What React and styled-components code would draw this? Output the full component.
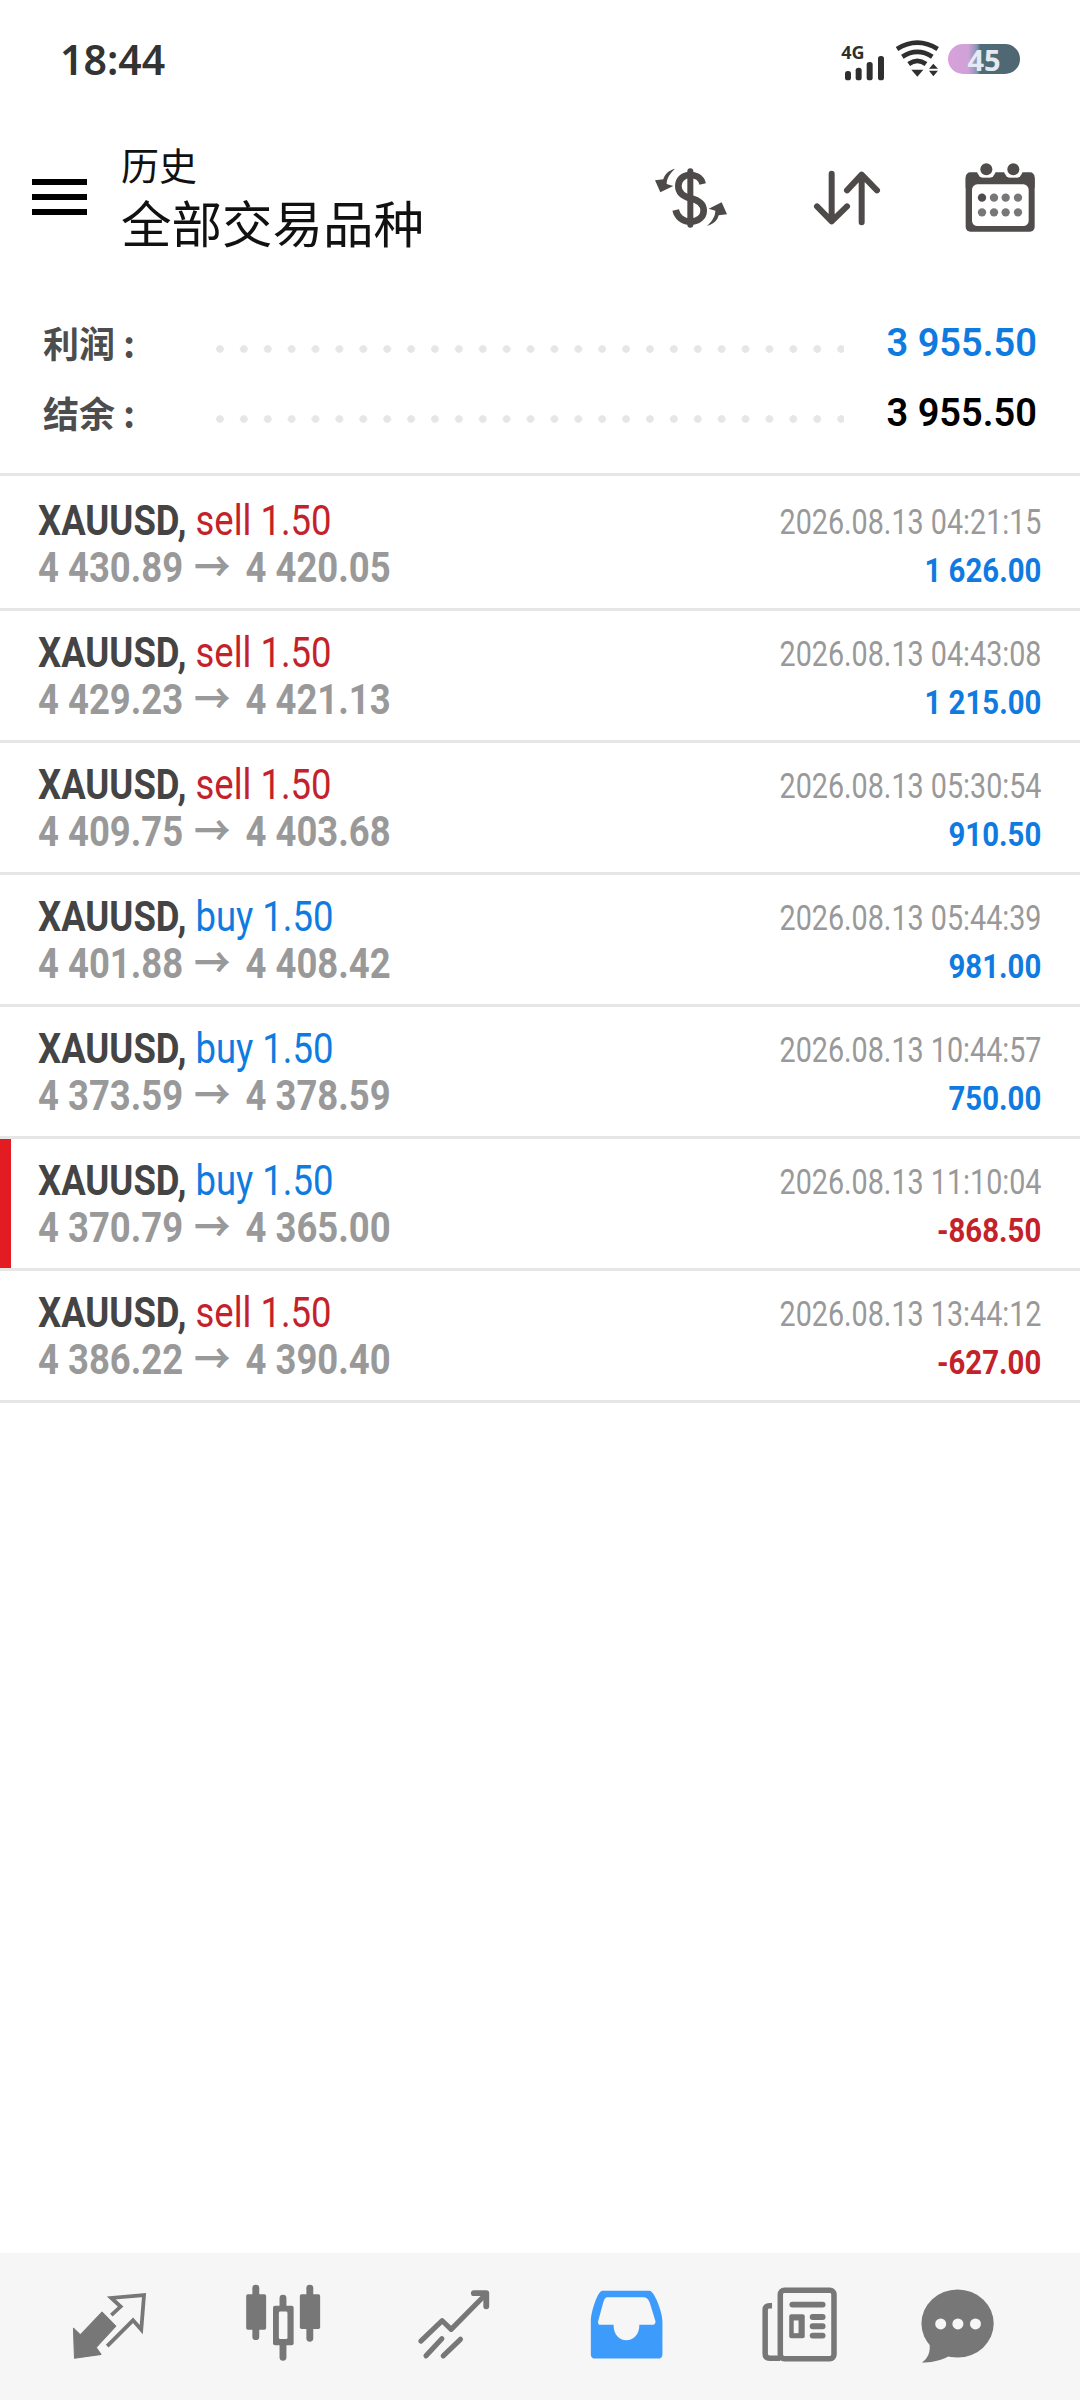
import styled, { createGlobalStyle } from "styled-components";

const GlobalStyle = createGlobalStyle`
  html, body {
    margin: 0;
    padding: 0;
    background: #fff;
  }
`;

const BLUE = "#0f7be0";
const RED = "#c4222a";
const NAV_BG = "#f6f6f6";

const Page = styled.div`
  display: flex;
  flex-direction: column;
  width: 1080px;
  height: 2400px;
  background: #fff;
  font-family: Roboto, "Noto Sans CJK SC", sans-serif;
`;

const StatusBar = styled.div`
  display: flex;
  justify-content: space-between;
  align-items: center;
  height: 118px;
  padding: 0 60px 0 60px;
  box-sizing: border-box;
`;

const Time = styled.div`
  font-family: "Noto Sans", sans-serif;
  font-size: 41px;
  font-weight: 600;
  color: #333;
`;

const StatusIcons = styled.div`
  display: flex;
  align-items: center;
  gap: 7px;
`;

const Battery = styled.div`
  display: flex;
  justify-content: center;
  align-items: center;
  width: 72px;
  height: 30px;
  border-radius: 15px;
  background: linear-gradient(90deg, #d9a0da 0%, #cfa2d8 28%, #8a94b4 40%, #4f6d78 45%, #4f6671 100%);
  color: #e4e9f2;
  font-family: "Noto Sans", sans-serif;
  font-size: 29px;
  font-weight: 700;
`;

const Header = styled.div`
  display: flex;
  align-items: center;
  height: 160px;
  padding: 0 42px 0 32px;
  box-sizing: border-box;
`;

const MenuButton = styled.div`
  display: flex;
  flex-direction: column;
  gap: 9px;
  width: 55px;
  margin: 0 34px 2px 0;
`;

const MenuBar = styled.span`
  display: block;
  height: 6px;
  background: #000;
`;

const TitleBlock = styled.div`
  display: flex;
  flex-direction: column;
  font-family: "Noto Sans CJK SC", sans-serif;
  color: #111;
`;

const SubTitle = styled.div`
  font-size: 38px;
  line-height: 47px;
`;

const Title = styled.div`
  font-size: 50.5px;
  line-height: 69px;
`;

const HeaderIcons = styled.div`
  display: flex;
  align-items: center;
  gap: 80px;
  margin-left: auto;
`;

const Summary = styled.div`
  display: flex;
  flex-direction: column;
  padding: 31px 43px 24px 43px;
`;

const SummaryRow = styled.div`
  display: flex;
  align-items: center;
  height: 70px;
`;

const SummaryLabel = styled.div`
  width: 165px;
  margin-bottom: 5px;
  font-family: "Noto Sans CJK SC", sans-serif;
  font-size: 36px;
  font-weight: 700;
  color: #4d4d4d;
`;

const Leader = styled.div`
  width: 636px;
  height: 10px;
  margin-top: 10px;
  background-image: radial-gradient(circle, #e6e6e6 3.5px, transparent 4px);
  background-size: 23.9px 10px;
`;

const SummaryValue = styled.div`
  margin: 0 0 3px auto;
  font-size: 38px;
  font-weight: 600;
  color: ${(p) => p.$color};
`;

const TradeList = styled.div`
  display: flex;
  flex-direction: column;
  flex: 1;
  border-top: 3px solid #e6e6e6;
`;

const TradeRow = styled.div`
  display: flex;
  justify-content: space-between;
  align-items: center;
  height: ${(p) => (p.$first ? 135 : 132)}px;
  padding: ${(p) => (p.$first ? 3 : 0)}px 39px 0 38px;
  box-sizing: border-box;
  border-bottom: 3px solid #e6e6e6;
  box-shadow: ${(p) => (p.$flagged ? "inset 11px 0 0 #e31b23" : "none")};
`;

const TradeLeft = styled.div`
  display: flex;
  flex-direction: column;
  transform: scaleX(0.868);
  transform-origin: left center;
  white-space: nowrap;
`;

const TradeRight = styled.div`
  display: flex;
  flex-direction: column;
  align-items: flex-end;
  padding-top: 6px;
  white-space: nowrap;
`;

const TopLine = styled.div`
  font-size: 42px;
  line-height: 47px;
  color: #444;
  font-weight: 700;
`;

const Side = styled.span`
  font-weight: 400;
  color: ${(p) => (p.$side === "buy" ? BLUE : RED)};
`;

const Prices = styled.div`
  font-size: 42px;
  line-height: 47px;
  font-weight: 700;
  color: #999;
`;

const Arrow = styled.span`
  margin: 0 7px 0 2px;
`;

const DateText = styled.div`
  font-size: 35px;
  line-height: 48px;
  color: #999;
  transform: scaleX(0.82);
  transform-origin: right center;
`;

const Profit = styled.div`
  font-size: 33px;
  line-height: 48px;
  font-weight: 700;
  color: ${(p) => (p.$negative ? RED : BLUE)};
  transform: scaleX(0.89);
  transform-origin: right center;
`;

const BottomNav = styled.div`
  display: flex;
  align-items: center;
  gap: 91.5px;
  height: 147px;
  padding-left: 70px;
  background: ${NAV_BG};
`;

const NavSlot = styled.div`
  display: flex;
  margin-left: ${(p) => p.$pull || 0}px;
`;

const trades = [
  { side: "sell", open: "4 430.89", close: "4 420.05", date: "2026.08.13 04:21:15", profit: "1 626.00" },
  { side: "sell", open: "4 429.23", close: "4 421.13", date: "2026.08.13 04:43:08", profit: "1 215.00" },
  { side: "sell", open: "4 409.75", close: "4 403.68", date: "2026.08.13 05:30:54", profit: "910.50" },
  { side: "buy", open: "4 401.88", close: "4 408.42", date: "2026.08.13 05:44:39", profit: "981.00" },
  { side: "buy", open: "4 373.59", close: "4 378.59", date: "2026.08.13 10:44:57", profit: "750.00" },
  { side: "buy", open: "4 370.79", close: "4 365.00", date: "2026.08.13 11:10:04", profit: "-868.50", flagged: true },
  { side: "sell", open: "4 386.22", close: "4 390.40", date: "2026.08.13 13:44:12", profit: "-627.00" },
];

// status bar drawings, coordinates are 3x screen px
const SignalIcon = () => (
  <svg width="48.33" height="46.67" viewBox="715 100 145 140">
    <text x="722" y="168" fontSize="54" fontWeight="700" fontFamily="Noto Sans, sans-serif" fill="#2f2f2f">4G</text>
    <g fill="#2f2f2f">
      <rect x="733" y="205" width="18" height="28" rx="8" />
      <rect x="765" y="195" width="18" height="38" rx="8" />
      <rect x="798" y="178" width="18" height="55" rx="8" />
      <rect x="832" y="160" width="18" height="73" rx="8" />
    </g>
  </svg>
);

const WifiIcon = () => (
  <svg width="46.67" height="40" viewBox="880 120 140 120">
    <g fill="none" stroke="#2f2f2f" strokeWidth="14">
      <path d="M889 150 Q950 112 1011 150" />
      <path d="M905 173 Q950 144 995 173" />
      <path d="M924 195 Q950 176 976 195" />
    </g>
    <path d="M932 212 H968 L950 233 Z" fill="#2f2f2f" />
    <path d="M998 194 L1012 209 H985 Z M985 215 H1012 L998 232 Z" fill="#2f2f2f" />
  </svg>
);

const DollarIcon = () => (
  <svg width="80" height="66.67" viewBox="150 495 240 200">
    <path d="M222 506 C200 512 190 525 187 538 L162 541 L178 577 L217 558 L197 552 C197 535 207 520 222 506 Z" fill="#4f4a4a" />
    <path d="M222 506 C200 512 190 525 187 538 L162 541 L178 577 L217 558 L197 552 C197 535 207 520 222 506 Z" fill="#4f4a4a" transform="rotate(180 270 592)" />
    <path d="M305 552 C300 530 280 525 268 525 C245 525 232 540 232 558 C232 580 250 590 268 595 C290 600 308 610 308 632 C308 652 290 665 268 665 C245 665 228 650 224 630" fill="none" stroke="#4f4a4a" strokeWidth="20" />
    <path d="M268 514 V674" stroke="#4f4a4a" strokeWidth="18" strokeLinecap="round" />
  </svg>
);

const SortIcon = () => (
  <svg width="71.67" height="60" viewBox="630 505 215 180">
    <g fill="none" stroke="#4f4a4a" strokeWidth="18" strokeLinecap="round" strokeLinejoin="round">
      <path d="M692 522 V665 M648 620 L692 665 L738 620" />
      <path d="M782 668 V525 M738 572 L782 525 L828 572" />
    </g>
  </svg>
);

const CalendarIcon = () => (
  <svg width="75" height="73.33" viewBox="1090 480 225 220">
    <rect x="1098" y="514" width="207" height="178" rx="14" fill="#504c4c" />
    <circle cx="1160" cy="505" r="29" fill="#fff" />
    <circle cx="1241" cy="505" r="29" fill="#fff" />
    <rect x="1098" y="530" width="207" height="30" fill="#504c4c" />
    <circle cx="1160" cy="505" r="18" fill="#504c4c" />
    <circle cx="1241" cy="505" r="18" fill="#504c4c" />
    <rect x="1117" y="550" width="170" height="125" rx="16" fill="#fff" />
    <g fill="#777">
      <circle cx="1147" cy="590" r="12.5" fill="#504c4c" />
      <circle cx="1183" cy="590" r="12.5" />
      <circle cx="1218" cy="590" r="12.5" />
      <circle cx="1255" cy="590" r="12.5" />
      <circle cx="1147" cy="634" r="12.5" />
      <circle cx="1183" cy="634" r="12.5" />
      <circle cx="1218" cy="634" r="12.5" />
      <circle cx="1255" cy="634" r="12.5" />
    </g>
  </svg>
);

// bottom nav drawings, coordinates come from the 2.9x crops
const TradeIcon = () => (
  <svg width="79.2" height="72.3" viewBox="205 155 230 210">
    <path d="M298 219 L338 260 L281 322 L295 342 L218 353 L215 266 L235 285 Z" fill="#777" strokeLinejoin="round" stroke="#777" strokeWidth="3" />
    <path d="M325 228 L352 203 L325 178 L420 170 L412 270 L388 243 L313 318" fill="none" stroke="#777" strokeWidth="11" />
  </svg>
);

const CandleIcon = () => (
  <svg width="82.6" height="86" viewBox="695 145 240 250">
    <g stroke="#777" strokeWidth="20" strokeLinecap="round">
      <path d="M738 157 V298" />
      <path d="M817 186 V358" />
      <path d="M895 157 V303" />
    </g>
    <g fill="#777">
      <rect x="710" y="175" width="58" height="103" rx="5" />
      <rect x="788" y="208" width="60" height="115" rx="6" />
      <rect x="866" y="175" width="59" height="101" rx="5" />
    </g>
    <rect x="805" y="225" width="25" height="80" rx="4" fill={NAV_BG} />
  </svg>
);

const ChartIcon = () => (
  <svg width="79.2" height="79.2" viewBox="1205 145 230 230">
    <g fill="none" stroke="#777" strokeWidth="15" strokeLinecap="round" strokeLinejoin="round">
      <path d="M1222 302 L1284 243 L1310 268 L1405 172" />
      <path d="M1376 163 H1412 V201" strokeWidth="17" />
      <path d="M1237 345 L1283 295" />
      <path d="M1287 345 L1337 297" />
    </g>
  </svg>
);

const InboxIcon = () => (
  <svg width="82.6" height="79.2" viewBox="130 145 240 230">
    <path
      fillRule="evenodd"
      fill="#3d9bfb"
      d="M180 156 L318 156 C330 156 355 215 355 245 L355 340 Q355 353 342 353 L160 353 Q147 353 147 340 L147 245 C147 215 168 156 180 156 Z M195 175 L300 175 Q312 175 318 190 L335 245 Q335 255 325 255 L288 255 C288 285 270 300 250 300 C230 300 213 285 213 255 L175 255 Q167 255 168 245 L183 190 Q187 175 195 175 Z"
    />
  </svg>
);

const NewsIcon = () => (
  <svg width="82.6" height="82.6" viewBox="640 140 240 240">
    <g fill="none" stroke="#777" strokeWidth="16">
      <rect x="699" y="155" width="156" height="199" rx="12" />
      <path d="M675 200 L668 200 Q655 200 655 212 L655 340 Q655 353 668 353 L699 353" />
    </g>
    <g stroke="#777" strokeWidth="17" strokeLinecap="round">
      <path d="M734 197 H822" />
      <path d="M793 233 H822" />
      <path d="M793 260 H822" />
      <path d="M793 287 H822" />
    </g>
    <rect x="725" y="225" width="45" height="70" rx="6" fill="#777" />
    <rect x="738" y="243" width="14" height="37" fill={NAV_BG} />
  </svg>
);

const ChatIcon = () => (
  <svg width="79.2" height="82.6" viewBox="1100 135 230 240">
    <ellipse cx="1212" cy="247" rx="105" ry="99" fill="#777" />
    <path d="M1130 300 C1135 330 1125 350 1108 360 C1135 362 1165 355 1195 338 Z" fill="#777" />
    <g fill={NAV_BG}>
      <circle cx="1163" cy="248" r="16" />
      <circle cx="1213" cy="248" r="16" />
      <circle cx="1264" cy="248" r="16" />
    </g>
  </svg>
);

function App() {
  return (
    <Page>
      <GlobalStyle />
      <StatusBar>
        <Time>18:44</Time>
        <StatusIcons>
          <SignalIcon />
          <WifiIcon />
          <Battery>45</Battery>
        </StatusIcons>
      </StatusBar>

      <Header>
        <MenuButton>
          <MenuBar />
          <MenuBar />
          <MenuBar />
        </MenuButton>
        <TitleBlock>
          <SubTitle>历史</SubTitle>
          <Title>全部交易品种</Title>
        </TitleBlock>
        <HeaderIcons>
          <DollarIcon />
          <SortIcon />
          <CalendarIcon />
        </HeaderIcons>
      </Header>

      <Summary>
        <SummaryRow>
          <SummaryLabel>利润 :</SummaryLabel>
          <Leader />
          <SummaryValue $color={BLUE}>3 955.50</SummaryValue>
        </SummaryRow>
        <SummaryRow>
          <SummaryLabel>结余 :</SummaryLabel>
          <Leader />
          <SummaryValue $color="#000">3 955.50</SummaryValue>
        </SummaryRow>
      </Summary>

      <TradeList>
        {trades.map((t, i) => (
          <TradeRow key={t.date} $first={i === 0} $flagged={t.flagged}>
            <TradeLeft>
              <TopLine>
                XAUUSD, <Side $side={t.side}>{t.side} 1.50</Side>
              </TopLine>
              <Prices>
                {t.open} <Arrow>→</Arrow> {t.close}
              </Prices>
            </TradeLeft>
            <TradeRight>
              <DateText>{t.date}</DateText>
              <Profit $negative={t.profit.startsWith("-")}>{t.profit}</Profit>
            </TradeRight>
          </TradeRow>
        ))}
      </TradeList>

      <BottomNav>
        <TradeIcon />
        <CandleIcon />
        <ChartIcon />
        <InboxIcon />
        <NewsIcon />
        <NavSlot $pull={-15}>
          <ChatIcon />
        </NavSlot>
      </BottomNav>
    </Page>
  );
}

export default App;
